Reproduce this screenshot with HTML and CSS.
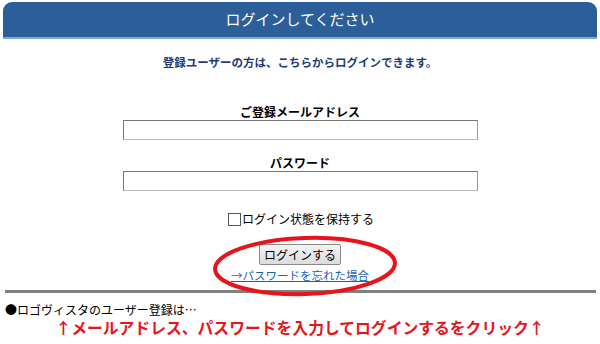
FILE: index.html
```html
<!DOCTYPE html>
<html lang="ja">
<head>
    <meta charset="UTF-8">
    <title>ログイン</title>
    <link rel="stylesheet" href="styles.css">
</head>
<body>
    <div class="page">
        <div class="login-box">
            <h1 class="login-title">ログインしてください</h1>
            <p class="lead">登録ユーザーの方は、こちらからログインできます。</p>
            <form class="login-form">
                <label class="field-label" for="email">ご登録メールアドレス</label>
                <input class="field" type="text" id="email" name="email">
                <label class="field-label" for="pass">パスワード</label>
                <input class="field" type="password" id="pass" name="pass">
                <div class="remember"><span class="check"></span>ログイン状態を保持する</div>
                <button class="login-btn" type="button">ログインする</button>
                <a class="forgot" href="#">→パスワードを忘れた場合</a>
            </form>
        </div>
        <hr class="rule">
        <p class="note">●ロゴヴィスタのユーザー登録は…</p>
        <p class="hint">↑メールアドレス、パスワードを入力してログインするをクリック↑</p>

        <!-- 赤丸の注記 -->
        <svg class="circle-mark" width="190" height="66" viewBox="0 0 190 66">
            <ellipse cx="95" cy="33" rx="90" ry="28" fill="none" stroke="#e8141c" stroke-width="4" transform="rotate(-2 95 33)"/>
        </svg>
    </div>
</body>
</html>
```

FILE: styles.css
```css
body {
    margin: 0;
    padding: 0;
    background: #fff;
    font-family: "Noto Sans CJK JP", sans-serif;
    font-size: 12px;
    color: #000;
}
.page {
    position: relative;
    width: 600px;
    height: 344px;
    padding: 2px 3px 0 3px;
    box-sizing: border-box;
}
.login-title {
    margin: 0;
    height: 35px;
    line-height: 34px;
    background: #2c5e9a;
    border-bottom: 2px solid #7fa6d6;
    border-radius: 9px 9px 0 0;
    color: #fff;
    font-size: 15px;
    font-weight: normal;
    text-align: center;
}
.lead {
    margin: 15px 0 0 0;
    color: #1e3c78;
    font-size: 11.5px;
    font-weight: bold;
    text-align: center;
    line-height: 16px;
}
.login-form {
    display: flex;
    flex-direction: column;
    align-items: center;
    margin-top: 34px;
}
.field-label {
    font-weight: bold;
    line-height: 16px;
}
.field {
    width: 355px;
    height: 20px;
    box-sizing: border-box;
    margin: 0;
    border: 1px solid #777;
    border-bottom-color: #bbb;
    border-right-color: #999;
    padding: 0;
}
.field + .field-label {
    margin-top: 15px;
}
.remember {
    display: flex;
    align-items: center;
    margin-top: 20px;
    margin-left: 2px;
    line-height: 16px;
    font-size: 12px;
}
.check {
    width: 11px;
    height: 11px;
    border: 1px solid #555;
    margin-right: 1px;
}
.login-btn {
    margin-top: 17px;
    width: 82px;
    height: 21px;
    padding: 0;
    font-family: inherit;
    font-size: 12px;
    background: linear-gradient(#f4f4f4, #dcdcdc);
    border: 1px solid #8a8a8a;
    border-radius: 2px;
    color: #000;
}
.forgot {
    margin-top: 2px;
    color: #1a5fb4;
    font-size: 11.5px;
    line-height: 16px;
    text-decoration: underline;
}
.rule {
    margin: 7px 1px 0 2px;
    border: 0;
    height: 3px;
    background: #808080;
}
.note {
    margin: 9px 0 0 2px;
    line-height: 16px;
}
.hint {
    margin: 1px 0 0 0;
    text-align: center;
    color: #e8141c;
    font-size: 15.8px;
    font-weight: bold;
    line-height: 18px;
}
.circle-mark {
    position: absolute;
    left: 210px;
    top: 233px;
}
```
